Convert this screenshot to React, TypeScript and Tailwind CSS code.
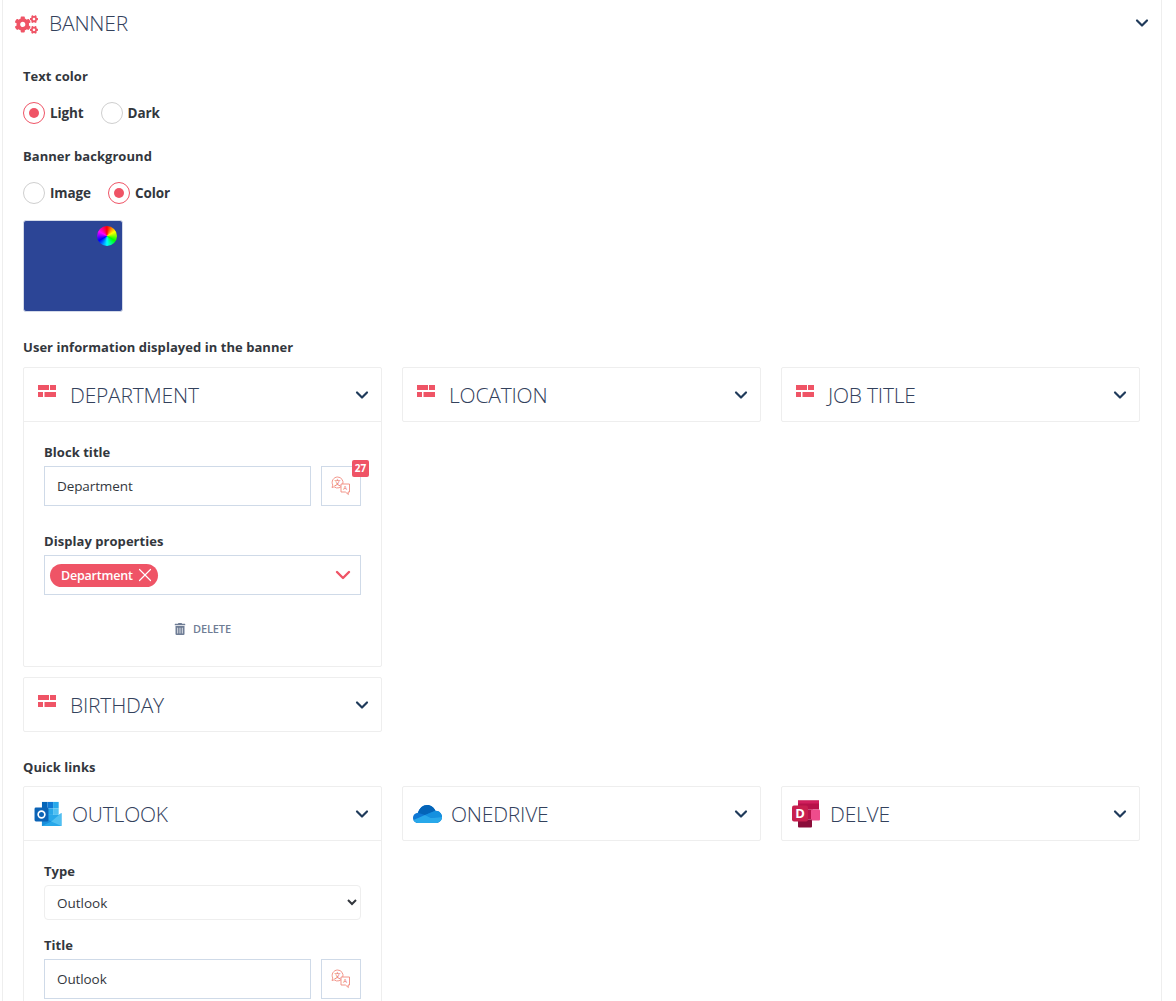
import { FaCogs, FaTrashAlt } from 'react-icons/fa';
import { ChevronDown, X } from 'lucide-react';
import type { ReactNode } from 'react';

const font = "font-['Open_Sans','Noto_Sans',sans-serif]";

function BlockIcon() {
  return (
    <svg width="18" height="13" viewBox="0 0 18 13" className="shrink-0 mb-1.5" fill="#ef5466">
      <rect x="0" y="0" width="11" height="5" />
      <rect x="12" y="0" width="6" height="5" />
      <rect x="0" y="7" width="5" height="5" />
      <rect x="6.5" y="7" width="11.5" height="5" />
    </svg>
  );
}

function OutlookIcon() {
  return (
    <svg width="28" height="26" viewBox="0 0 29 28" className="shrink-0">
      <rect x="8" y="1" width="6" height="7" fill="#0364b8" />
      <rect x="14" y="1" width="6" height="7" fill="#0f78d4" />
      <rect x="20" y="1" width="6" height="7" fill="#28a8ea" />
      <rect x="8" y="8" width="6" height="7" fill="#0f78d4" />
      <rect x="14" y="8" width="6" height="7" fill="#28a8ea" />
      <rect x="20" y="8" width="6" height="7" fill="#50c0f2" />
      <path d="M8 15 L26 15 L29 13 L29 27 L8 27 Z" fill="#28a8ea" />
      <path d="M8 16 L18 22 L8 27 Z" fill="#1a8fdc" />
      <path d="M29 13 L18 22 L29 27 Z" fill="#50c0f2" />
      <rect x="0" y="7" width="15" height="15" rx="1.5" fill="#0b63b6" />
      <circle cx="7.5" cy="14.5" r="3.6" fill="none" stroke="#fff" strokeWidth="1.8" />
    </svg>
  );
}

function OneDriveIcon() {
  return (
    <svg width="29" height="19" viewBox="0 0 29 19" className="shrink-0">
      <path d="M5 19 C2 19 0 16.5 0 14 C0 11 2.3 8.8 5 8.7 C6.5 4 10 1 14 1 C18 1 21 3.5 22.3 6.7 C26 6.5 29 9.5 29 13 C29 16.5 26 19 23 19 Z" fill="#0f78d4" />
      <path d="M14 1 C10 1 6.5 4 5 8.7 L12 11 L22.3 6.7 C21 3.5 18 1 14 1 Z" fill="#0364b8" />
      <path d="M22.3 6.7 C26 6.5 29 9.5 29 13 L18 14 L12 11 Z" fill="#1490df" />
      <path d="M5 19 C3 19 1 17.5 0.5 16 L12 11 L18 14 L29 13 C29 16.5 26 19 23 19 Z" fill="#28a8ea" />
    </svg>
  );
}

function DelveIcon() {
  return (
    <svg width="29" height="28" viewBox="0 0 29 27" className="shrink-0">
      <rect x="6" y="0" width="21" height="9" fill="#b7124a" />
      <rect x="6" y="0" width="21" height="3" fill="#d11f5d" />
      <rect x="6" y="9" width="15" height="10" fill="#b7124a" />
      <rect x="19" y="9" width="9" height="11" rx="1" fill="#ee4c8c" />
      <rect x="6" y="19" width="14" height="8" rx="1" fill="#8a0d3a" />
      <rect x="0" y="5" width="16" height="16" rx="2" fill="#c81f4f" />
      <text x="8" y="17.5" textAnchor="middle" fontSize="13" fontWeight="700" fill="#fff" fontFamily="Open Sans, sans-serif">D</text>
    </svg>
  );
}

function TranslateIcon() {
  return (
    <svg width="20" height="20" viewBox="0 0 20 20" fill="#fff" stroke="#f08a7e" strokeWidth="0.9">
      <path d="M6.5 1 a5.5 5.5 0 1 1 -3.4 9.8 L1 11.5 l0.8 -2.4 A5.5 5.5 0 0 1 6.5 1 Z" />
      <path d="M10 8 h8.5 v8 h-1.5 l0.4 2.5 l-3 -2.5 h-4.4 Z" />
      <text x="6.5" y="9" textAnchor="middle" fontSize="6.5" stroke="none" fill="#e8705f" fontFamily="Noto Sans CJK SC, sans-serif">文</text>
      <text x="14.2" y="14.3" textAnchor="middle" fontSize="6" stroke="none" fill="#e8705f" fontFamily="Open Sans, sans-serif">A</text>
    </svg>
  );
}

function Radio({ label, checked }: { label: string; checked?: boolean }) {
  return (
    <div className="flex items-center">
      <span className={`flex h-[22px] w-[22px] items-center justify-center rounded-full border bg-white ${checked ? 'border-[#ef5466]' : 'border-[#cfcfcf]'}`}>
        {checked && <span className="h-[10px] w-[10px] rounded-full bg-[#ef5466]" />}
      </span>
      <span className="ml-[5px] text-[13.5px] font-bold tracking-[-0.1px] text-[#33373d]">{label}</span>
    </div>
  );
}

function Label({ children, className = '' }: { children: ReactNode; className?: string }) {
  return <div className={`text-[13px] font-bold leading-[18px] tracking-[0.05px] text-[#33373d] ${className}`}>{children}</div>;
}

function CardHeader({ icon, title, gap = 'ml-[14px]', divider }: { icon: ReactNode; title: string; gap?: string; divider?: boolean }) {
  return (
    <div className={`flex items-center pl-[14px] pr-[9px] ${divider ? 'h-[54px] border-b border-[#eeeeee]' : 'h-[53px]'}`}>
      {icon}
      <span className={`${gap} mt-[2px] text-[21px] font-light tracking-[-0.2px] text-[#33415c]`}>{title}</span>
      <ChevronDown size={20} strokeWidth={2.6} className="ml-auto text-[#1f3a5a]" />
    </div>
  );
}

function Card({ children }: { children: ReactNode }) {
  return <div className="rounded-[2px] border border-[#eeeeee] bg-white">{children}</div>;
}

function TextRow({ value, badge }: { value: string; badge?: string }) {
  return (
    <div className="flex gap-[10px]">
      <input
        readOnly
        value={value}
        className="h-[40px] w-[267px] border border-[#cfdae8] px-3 text-[13.5px] tracking-[-0.1px] text-[#33373d] outline-none"
      />
      <div className="relative flex h-[40px] w-[40px] items-center justify-center border border-[#cfdae8]">
        <TranslateIcon />
        {badge && (
          <span className="absolute -right-[9px] -top-[7px] flex h-[17px] w-[17px] items-center justify-center rounded-[2px] bg-[#ef5466] text-[10px] font-bold text-white">
            {badge}
          </span>
        )}
      </div>
    </div>
  );
}

export default function App() {
  return (
    <div className={`h-screen overflow-hidden bg-white px-[2px] ${font}`}>
      <div className="h-full w-[1160px] border-x border-[#eeeeee]">
        <div className="flex h-[48px] items-center pl-[12px] pr-[9px]">
          <FaCogs size={23} className="text-[#ef5466]" />
          <span className="ml-[11px] text-[21px] font-light tracking-[-0.2px] text-[#33415c]">BANNER</span>
          <ChevronDown size={20} strokeWidth={2.6} className="mb-[2px] ml-auto text-[#1f3a5a]" />
        </div>

        <div className="pl-[20px] pr-[21px]">
          <Label className="mt-[19px]">Text color</Label>
          <div className="mt-[17px] flex gap-[17px]">
            <Radio label="Light" checked />
            <Radio label="Dark" />
          </div>

          <Label className="mt-[23px]">Banner background</Label>
          <div className="mt-[17px] flex gap-[17px]">
            <Radio label="Image" />
            <Radio label="Color" checked />
          </div>

          <div className="relative mt-[16px] h-[92px] w-[100px] rounded-[3px] border border-[#d3d9e8] bg-[#2c4596]">
            <span className="absolute right-[5px] top-[5px] h-[20px] w-[20px] rounded-full bg-[conic-gradient(#ff0000,#ffff00,#00ff00,#00ffff,#0000ff,#ff00ff,#ff0000)]" />
          </div>

          <Label className="mt-[26px]">User information displayed in the banner</Label>
          <div className="mt-[11px] grid grid-cols-[359px_359px_359px] items-start gap-x-[20px] gap-y-[10px]">
            <Card>
              <CardHeader icon={<BlockIcon />} title="DEPARTMENT" divider />
              <div className="h-[244px] px-[20px] pt-[21px]">
                <Label>Block title</Label>
                <div className="mt-[5px]">
                  <TextRow value="Department" badge="27" />
                </div>
                <Label className="mt-[26px]">Display properties</Label>
                <div className="mt-[5px] flex h-[40px] items-center border border-[#cfdae8] pl-[5px] pr-[5px]">
                  <span className="flex h-[23px] items-center rounded-full bg-[#ef5466] pl-[11px] pr-[2px] text-[12.5px] font-semibold tracking-[-0.2px] text-white">
                    <span className="pt-[2px]">Department</span>
                    <X size={22} strokeWidth={1.3} className="ml-[1px]" />
                  </span>
                  <ChevronDown size={24} strokeWidth={2.4} className="ml-auto text-[#ef5466]" />
                </div>
                <div className="mt-[26px] flex items-center justify-center text-[#6f7d95]">
                  <FaTrashAlt size={12} />
                  <span className="ml-[7px] text-[11px] font-semibold tracking-[-0.1px]">DELETE</span>
                </div>
              </div>
            </Card>
            <Card>
              <CardHeader icon={<BlockIcon />} title="LOCATION" />
            </Card>
            <Card>
              <CardHeader icon={<BlockIcon />} title="JOB TITLE" />
            </Card>
            <Card>
              <CardHeader icon={<BlockIcon />} title="BIRTHDAY" />
            </Card>
          </div>

          <Label className="mt-[26px]">Quick links</Label>
          <div className="mt-[10px] grid grid-cols-[359px_359px_359px] items-start gap-x-[20px]">
            <Card>
              <div className="[&>div]:pl-[10px]">
                <CardHeader icon={<OutlookIcon />} title="OUTLOOK" gap="ml-[10px]" divider />
              </div>
              <div className="h-[169px] px-[20px] pt-[21px]">
                <Label>Type</Label>
                <select
                  defaultValue="Outlook"
                  className="mt-[5px] block h-[35px] w-[317px] rounded-[4px] border border-[#eeeeee] bg-white pl-[8px] text-[13.5px] text-[#33373d]"
                >
                  <option>Outlook</option>
                </select>
                <Label className="mt-[16px]">Title</Label>
                <div className="mt-[5px]">
                  <TextRow value="Outlook" />
                </div>
              </div>
            </Card>
            <Card>
              <div className="[&>div]:pl-[10px]">
                <CardHeader icon={<OneDriveIcon />} title="ONEDRIVE" gap="ml-[9px]" />
              </div>
            </Card>
            <Card>
              <div className="[&>div]:pl-[10px]">
                <CardHeader icon={<DelveIcon />} title="DELVE" gap="ml-[9px]" />
              </div>
            </Card>
          </div>
        </div>
      </div>
    </div>
  );
}
